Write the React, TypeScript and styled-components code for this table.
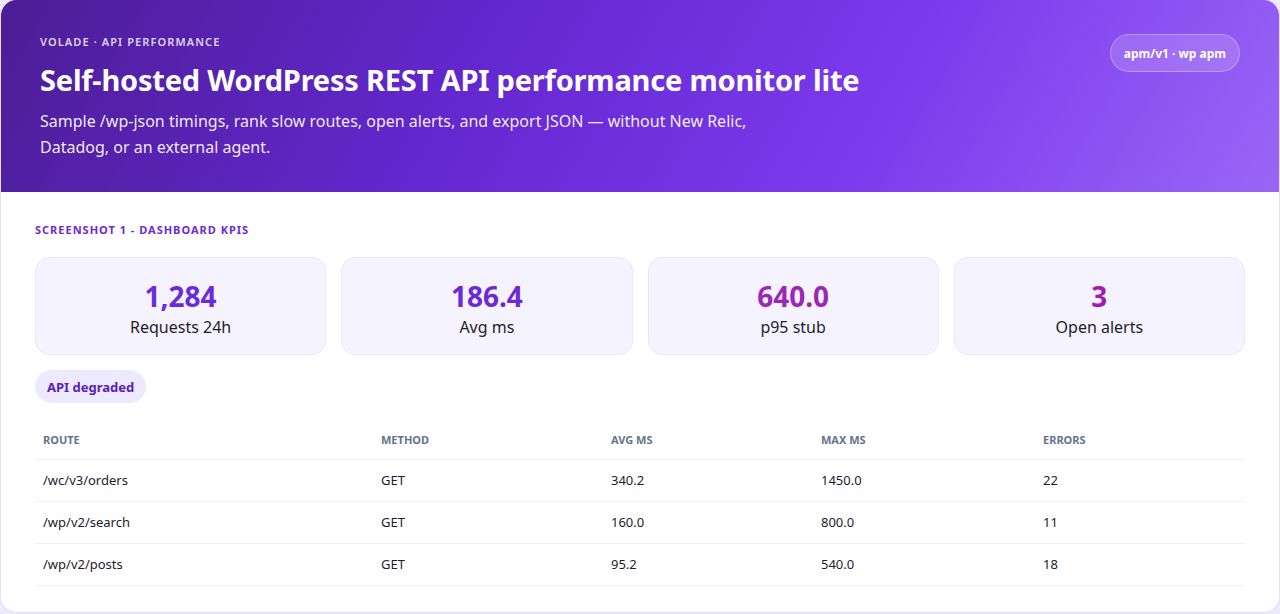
import React from 'react'
import styled, { createGlobalStyle } from 'styled-components'

const GlobalStyle = createGlobalStyle`
    * { box-sizing: border-box; }
    html, body {
        margin: 0;
        padding: 0;
        background: #ede9fe;
        font-family: 'Noto Sans', 'Open Sans', sans-serif;
        color: #1e1b2e;
    }
`

const Shell = styled.div`
    background: #ffffff;
    border: 1px solid #e4ddfb;
    border-top: none;
    border-radius: 16px;
    overflow: hidden;
    height: 613px;
`

const Hero = styled.header`
    height: 192px;
    padding: 34px 39px 0 39px;
    display: flex;
    justify-content: space-between;
    align-items: flex-start;
    color: #ffffff;
    background: linear-gradient(120deg, #4c1d95 0%, #6428d0 38%, #7c3aed 68%, #9a66f6 100%);
`

const HeroText = styled.div`
    display: flex;
    flex-direction: column;
`

const Eyebrow = styled.div`
    font-size: 11px;
    font-weight: 600;
    letter-spacing: 1.1px;
    text-transform: uppercase;
    color: rgba(255, 255, 255, 0.82);
    line-height: 16px;
`

const Title = styled.h1`
    margin: 10px 0 0 0;
    font-size: 29px;
    font-weight: 700;
    line-height: 40px;
    letter-spacing: -0.2px;
`

const Lead = styled.p`
    margin: 8px 0 0 0;
    max-width: 720px;
    font-size: 16px;
    line-height: 26px;
    color: rgba(255, 255, 255, 0.92);
`

const Pill = styled.div`
    flex: none;
    height: 38px;
    padding: 0 13px;
    border-radius: 19px;
    display: flex;
    align-items: center;
    font-size: 12px;
    font-weight: 700;
    background: rgba(255, 255, 255, 0.16);
    border: 1px solid rgba(255, 255, 255, 0.3);
`

const Body = styled.main`
    padding: 30px 34px 0 34px;
`

const SectionLabel = styled.div`
    font-size: 11px;
    font-weight: 700;
    letter-spacing: 1px;
    text-transform: uppercase;
    color: #6d28d9;
    line-height: 16px;
`

const KpiGrid = styled.div`
    margin-top: 19px;
    display: grid;
    grid-template-columns: repeat(4, 1fr);
    gap: 15px;
`

const KpiCard = styled.div`
    height: 98px;
    padding-top: 21px;
    border-radius: 14px;
    background: #f5f3ff;
    border: 1px solid #ebe6fd;
    display: flex;
    flex-direction: column;
    align-items: center;
`

const KpiValue = styled.div<{ tone: string }>`
    font-size: 28px;
    font-weight: 700;
    line-height: 34px;
    color: ${(p) => p.tone};
`

const KpiLabel = styled.div`
    margin-top: 3px;
    font-size: 16px;
    line-height: 22px;
    color: #1e1b2e;
`

const Status = styled.div`
    margin-top: 15px;
    display: inline-flex;
    align-items: center;
    height: 33px;
    padding: 0 12px;
    border-radius: 17px;
    background: #ede9fe;
    color: #5b21b6;
    font-size: 13px;
    font-weight: 700;
`

const Table = styled.table`
    margin-top: 18px;
    width: 100%;
    border-collapse: collapse;
    table-layout: fixed;
`

const Th = styled.th<{ w: number }>`
    width: ${(p) => p.w}px;
    text-align: left;
    padding: 0 8px;
    height: 38px;
    font-size: 11px;
    font-weight: 700;
    text-transform: uppercase;
    color: #64748b;
    border-bottom: 1px solid #eef0f5;
`

const Td = styled.td`
    padding: 0 8px;
    height: 42px;
    font-size: 13px;
    color: #1e1b2e;
    border-bottom: 1px solid #eef0f5;
`

const kpis = [
    { value: '1,284', label: 'Requests 24h', tone: '#6a2bd8' },
    { value: '186.4', label: 'Avg ms', tone: '#6c2ad6' },
    { value: '640.0', label: 'p95 stub', tone: '#9b27b8' },
    { value: '3', label: 'Open alerts', tone: '#a21caf' },
]

const columns = [
    { key: 'route', label: 'Route', w: 338 },
    { key: 'method', label: 'Method', w: 230 },
    { key: 'avg', label: 'Avg ms', w: 210 },
    { key: 'max', label: 'Max ms', w: 222 },
    { key: 'errors', label: 'Errors', w: 210 },
]

const rows = [
    { route: '/wc/v3/orders', method: 'GET', avg: '340.2', max: '1450.0', errors: '22' },
    { route: '/wp/v2/search', method: 'GET', avg: '160.0', max: '800.0', errors: '11' },
    { route: '/wp/v2/posts', method: 'GET', avg: '95.2', max: '540.0', errors: '18' },
]

const App: React.FC = () => {
    return (
        <>
            <GlobalStyle />
            <Shell>
                <Hero>
                    <HeroText>
                        <Eyebrow>Volade · API Performance</Eyebrow>
                        <Title>Self-hosted WordPress REST API performance monitor lite</Title>
                        <Lead>
                            Sample /wp-json timings, rank slow routes, open alerts, and export JSON — without New Relic,
                            Datadog, or an external agent.
                        </Lead>
                    </HeroText>
                    <Pill>apm/v1 · wp apm</Pill>
                </Hero>
                <Body>
                    <SectionLabel>Screenshot 1 - Dashboard KPIs</SectionLabel>
                    <KpiGrid>
                        {kpis.map((k) => (
                            <KpiCard key={k.label}>
                                <KpiValue tone={k.tone}>{k.value}</KpiValue>
                                <KpiLabel>{k.label}</KpiLabel>
                            </KpiCard>
                        ))}
                    </KpiGrid>
                    <Status>API degraded</Status>
                    <Table>
                        <thead>
                            <tr>
                                {columns.map((c) => (
                                    <Th key={c.key} w={c.w}>
                                        {c.label}
                                    </Th>
                                ))}
                            </tr>
                        </thead>
                        <tbody>
                            {rows.map((r) => (
                                <tr key={r.route}>
                                    <Td>{r.route}</Td>
                                    <Td>{r.method}</Td>
                                    <Td>{r.avg}</Td>
                                    <Td>{r.max}</Td>
                                    <Td>{r.errors}</Td>
                                </tr>
                            ))}
                        </tbody>
                    </Table>
                </Body>
            </Shell>
        </>
    )
}

export default App
